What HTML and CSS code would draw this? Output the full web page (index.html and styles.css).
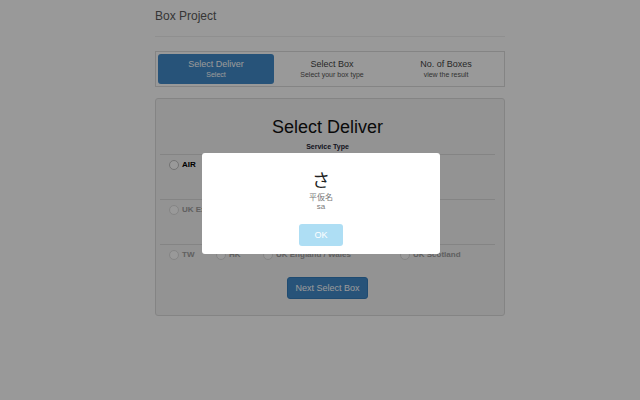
FILE: index.html
```html
<!DOCTYPE html>
<html lang="en">
  <head>
    <meta charset="UTF-8" />
    <meta name="viewport" content="width=device-width, initial-scale=1.0" />
    <title>Box Project</title>
    <link rel="stylesheet" href="styles.css">
  </head>
  <body>
    <div class="container">
      <div class="page-header">Box Project</div>

      <div class="steps">
        <div class="step active">
          <div class="step-title">Select Deliver</div>
          <div class="step-sub">Select</div>
        </div>
        <div class="step">
          <div class="step-title">Select Box</div>
          <div class="step-sub">Select your box type</div>
        </div>
        <div class="step">
          <div class="step-title">No. of Boxes</div>
          <div class="step-sub">view the result</div>
        </div>
      </div>

      <div class="panel">
        <h2>Select Deliver</h2>
        <div class="service-type">Service Type</div>

        <div class="option-row tall">
          <label class="radio checked"><span class="circle"></span>AIR</label>
        </div>
        <div class="option-row tall">
          <label class="radio"><span class="circle"></span>UK Express</label>
        </div>
        <div class="option-row grid">
          <label class="radio"><span class="circle"></span>TW</label>
          <label class="radio"><span class="circle"></span>HK</label>
          <label class="radio"><span class="circle"></span>UK England / Wales</label>
          <label class="radio"><span class="circle"></span>UK Scotland</label>
        </div>

        <div class="actions">
          <button type="button" class="btn-primary">Next Select Box</button>
        </div>
      </div>
    </div>

    <!-- alert -->
    <div class="overlay"></div>
    <div class="alert">
      <div class="alert-char">さ</div>
      <div class="alert-text">平仮名</div>
      <div class="alert-text">sa</div>
      <button type="button" class="btn-ok">OK</button>
    </div>
  </body>
</html>
```

FILE: styles.css
```css
body {
  font-family: "Liberation Sans", Arial, "Noto Sans CJK JP", sans-serif;
  background-color: #ffffff;
  margin: 0;
  color: #333333;
}

.container {
  width: 350px;
  margin-left: calc(50% - 165px);
}

.page-header {
  font-size: 12px;
  line-height: 16px;
  color: #5a5a5a;
  padding: 8px 0 12px;
  border-bottom: 1px solid #eeeeee;
}

.steps {
  margin-top: 14px;
  border: 1px solid #dddddd;
  padding: 2px;
  display: grid;
  grid-template-columns: 116px 116px 1fr;
}

.step {
  text-align: center;
  padding: 4px 0;
  border-radius: 3px;
}

.step-title {
  font-size: 9px;
  line-height: 12px;
  color: #444444;
}

.step-sub {
  font-size: 7px;
  line-height: 10px;
  color: #555555;
}

.step.active {
  background-color: #428bca;
}

.step.active .step-title,
.step.active .step-sub {
  color: #ffffff;
}

.panel {
  margin-top: 11px;
  border: 1px solid #dddddd;
  border-radius: 3px;
  background-color: #f5f5f5;
  padding: 17px 9px 16px 4px;
}

h2 {
  margin: 0;
  font-size: 18px;
  line-height: 22px;
  font-weight: normal;
  color: #111111;
  text-align: center;
}

.service-type {
  margin-top: 4px;
  margin-bottom: 3px;
  font-size: 7px;
  line-height: 9px;
  font-weight: bold;
  text-align: center;
  color: #222233;
}

.option-row {
  border-top: 1px solid #dddddd;
  padding: 5px 0 5px 9px;
}

.option-row.tall {
  height: 34px;
}

.option-row.grid {
  display: grid;
  grid-template-columns: 47px 47px 137px 1fr;
}

.radio {
  display: flex;
  align-items: center;
  gap: 3px;
  font-size: 8px;
  line-height: 10px;
  font-weight: bold;
  color: #a0a0a0;
}

.radio.checked {
  color: #000000;
}

.circle {
  width: 8px;
  height: 8px;
  border: 1px solid #dddddd;
  border-radius: 50%;
  background-color: #ffffff;
}

.radio.checked .circle {
  border-color: #c0c0c0;
}

.actions {
  margin-top: 12px;
  text-align: center;
}

.btn-primary {
  background-color: #428bca;
  border: 1px solid #357ebd;
  color: #ffffff;
  font-family: inherit;
  font-size: 9px;
  width: 81px;
  height: 22px;
  padding: 0;
  border-radius: 3px;
}

.overlay {
  position: fixed;
  inset: 0;
  background-color: rgba(0, 0, 0, 0.4);
}

.alert {
  position: fixed;
  top: 153px;
  left: 0;
  right: -2px;
  margin: 0 auto;
  width: 238px;
  height: 101px;
  box-sizing: border-box;
  padding-top: 15px;
  background-color: #ffffff;
  border-radius: 3px;
  text-align: center;
}

.alert-char {
  font-family: "Noto Sans CJK JP", sans-serif;
  font-size: 18px;
  line-height: 22px;
  color: #222222;
  margin-bottom: 3px;
}

.alert-text {
  font-family: "Liberation Sans", "Noto Sans CJK JP", sans-serif;
  font-size: 8px;
  line-height: 9px;
  color: #797979;
}

.btn-ok {
  margin-top: 13px;
  width: 44px;
  height: 22px;
  padding: 0;
  border: none;
  border-radius: 3px;
  background-color: #aedef4;
  color: #ffffff;
  font-family: inherit;
  font-size: 9px;
}
```
